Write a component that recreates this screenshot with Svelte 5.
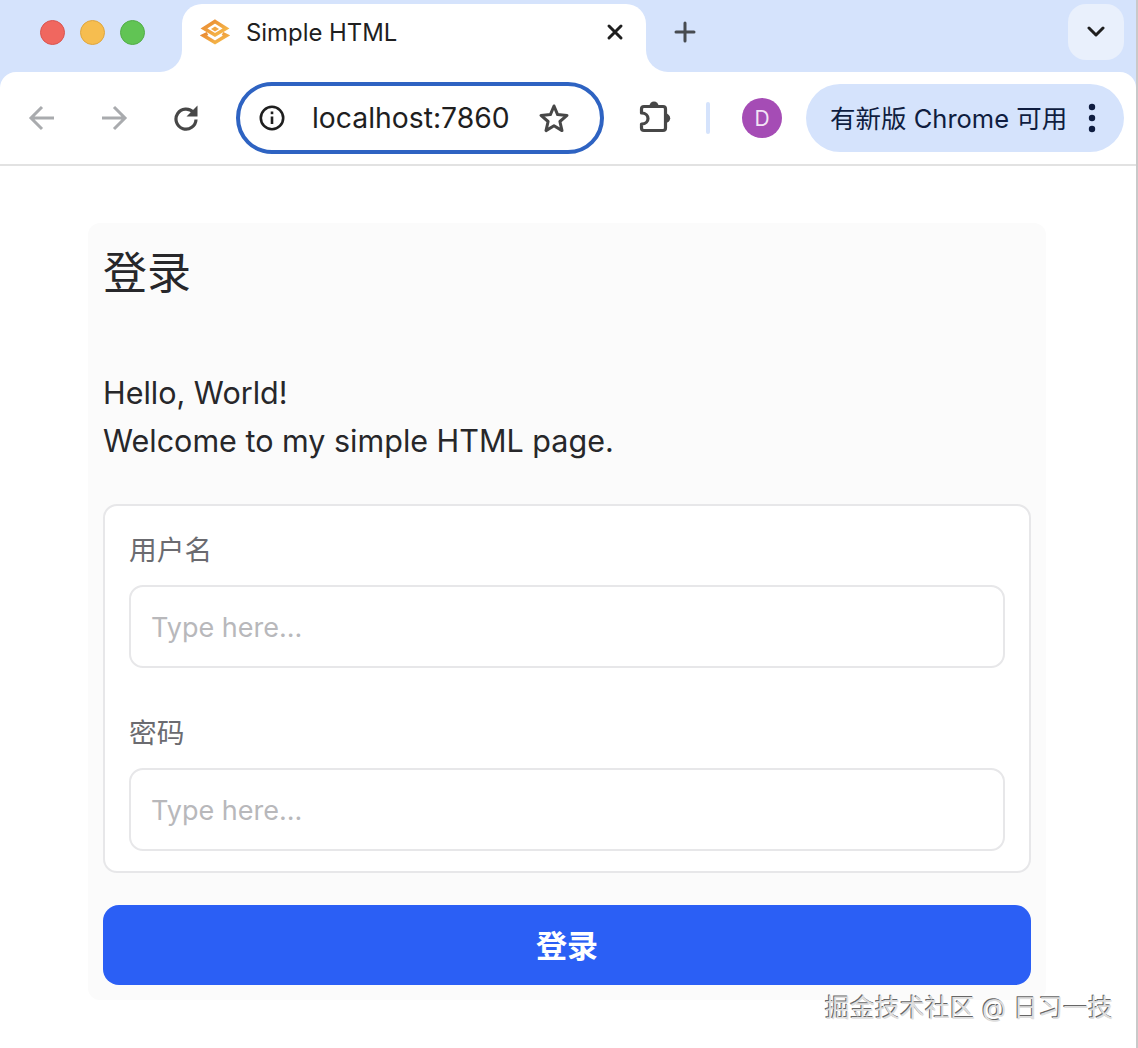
<script>
	const fields = [
		{ label: "用户名", type: "text" },
		{ label: "密码", type: "password" }
	];
</script>

<div class="window">
	<header class="chrome">
		<div class="strip">
			<div class="lights">
				<span class="light red"></span>
				<span class="light yellow"></span>
				<span class="light green"></span>
			</div>
			<div class="tab">
				<svg class="favicon" width="30" height="26" viewBox="0 0 30 26" fill="none">
					<defs>
						<linearGradient id="fav" x1="0" y1="0" x2="1" y2="1">
							<stop offset="0" stop-color="#e98a33" />
							<stop offset="1" stop-color="#f7bd4b" />
						</linearGradient>
					</defs>
					<path d="M15 2.5 L26 9.5 L15 16 L4 9.5 Z" stroke="url(#fav)" stroke-width="3.6" />
					<path d="M7.5 14.5 L3.5 16.5 L15 23.5 L26.5 16.5 L22.5 14.5" stroke="url(#fav)" stroke-width="3.6" />
					<path d="M15 7.5 L19 10 L15 12.5 L11 10 Z" fill="#f2a743" />
				</svg>
				<span class="tab-title">Simple HTML</span>
				<svg class="close" width="20" height="20" viewBox="0 0 20 20" stroke="#1f1f1f" stroke-width="3" stroke-linecap="round">
					<path d="M4 4 L16 16 M16 4 L4 16" />
				</svg>
			</div>
			<div class="strip-rest">
				<svg class="plus" width="22" height="22" viewBox="0 0 22 22" stroke="#474b50" stroke-width="3" stroke-linecap="round">
					<path d="M11 2 V20 M2 11 H20" />
				</svg>
				<div class="tab-search">
					<svg width="18" height="12" viewBox="0 0 18 12" fill="none" stroke="#1f1f1f" stroke-width="3" stroke-linecap="round" stroke-linejoin="round">
						<path d="M2 2 L9 9 L16 2" />
					</svg>
				</div>
			</div>
		</div>

		<div class="toolbar">
			<svg class="nav back" width="28" height="26" viewBox="0 0 28 26" fill="none" stroke="#a9abae" stroke-width="3">
				<path d="M26 13 H4 M14 2 L3 13 L14 24" />
			</svg>
			<svg class="nav forward" width="28" height="26" viewBox="0 0 28 26" fill="none" stroke="#a9abae" stroke-width="3">
				<path d="M2 13 H24 M14 2 L25 13 L14 24" />
			</svg>
			<svg class="nav reload" width="26" height="26" viewBox="0 0 26 26" fill="none">
				<path d="M20.5 7.5 A10 10 0 1 0 23 14.5" stroke="#474747" stroke-width="3.2" />
				<path d="M24.5 0.5 V11.5 H13.5 Z" fill="#474747" />
			</svg>
			<div class="omnibox">
				<svg width="26" height="26" viewBox="0 0 26 26" fill="none" stroke="#1f1f1f" stroke-width="2.6">
					<circle cx="13" cy="13" r="11.2" />
					<path d="M13 11.5 V19" />
					<path d="M13 6.5 V9.2" />
				</svg>
				<span class="url">localhost:7860</span>
				<svg class="star" width="32" height="30" viewBox="0 0 32 30" fill="none" stroke="#474747" stroke-width="3" stroke-linejoin="round">
					<path d="M16 3 L19.6 11.6 L29 12.4 L21.9 18.5 L24 27.6 L16 22.8 L8 27.6 L10.1 18.5 L3 12.4 L12.4 11.6 Z" />
				</svg>
			</div>
			<svg class="puzzle" width="36" height="36" viewBox="0 0 36 36" fill="none">
				<path d="M6 6.5 H25 a2.5 2.5 0 0 1 2.5 2.5 V28 a2.5 2.5 0 0 1 -2.5 2.5 H6 a2.5 2.5 0 0 1 -2.5 -2.5 V24 C8 24 10 21 10 18.5 C10 16 8 13 3.5 13 V9 a2.5 2.5 0 0 1 2.5 -2.5 Z" stroke="#474747" stroke-width="3.2" stroke-linejoin="round" />
				<path d="M11.5 6 a4.5 4.5 0 0 1 9 0 Z" fill="#474747" />
				<path d="M27.5 13.5 a4.7 4.7 0 0 1 0 9.4 Z" fill="#474747" />
			</svg>
			<span class="divider"></span>
			<span class="avatar">D</span>
			<div class="update">
				<span class="update-text">有新版 Chrome 可用</span>
				<svg width="8" height="30" viewBox="0 0 8 30" fill="#0f1d40">
					<circle cx="4" cy="4" r="3.2" />
					<circle cx="4" cy="15" r="3.2" />
					<circle cx="4" cy="26" r="3.2" />
				</svg>
			</div>
		</div>
	</header>

	<main class="page">
		<section class="card">
			<h1>登录</h1>
			<div class="intro">
				<p>Hello, World!</p>
				<p>Welcome to my simple HTML page.</p>
			</div>
			<div class="form">
				{#each fields as field}
				<label class="field">
					<span class="field-label">{field.label}</span>
					<input type={field.type} placeholder="Type here..." />
				</label>
				{/each}
			</div>
			<button class="submit"><span>登录</span></button>
		</section>
	</main>

	<div class="watermark">掘金技术社区 @ 日习一技</div>
</div>

<style>
	:global(body) {
		margin: 0;
		background: #fff;
	}
	.window {
		position: relative;
		width: 1136px;
		height: 1048px;
		border-right: 2px solid #c9c9c9;
		overflow: hidden;
		font-family: Inter, "Noto Sans CJK SC", sans-serif;
		color: #27272a;
	}
	.chrome {
		background: #d5e3fc;
		border-top-right-radius: 10px;
	}
	.strip {
		display: flex;
		height: 72px;
		background: linear-gradient(#d5e3fc 0 36px, #fff 36px);
	}
	.lights {
		display: flex;
		gap: 15px;
		padding: 20px 0 0 40px;
		box-sizing: border-box;
		width: 182px;
		background: #d5e3fc;
		border-bottom-right-radius: 22px;
	}
	.light {
		width: 25px;
		height: 25px;
		box-sizing: border-box;
		border-radius: 50%;
	}
	.red {
		background: #f0675f;
		border: 1px solid #d9554f;
	}
	.yellow {
		background: #f6bd4f;
		border: 1px solid #dfa63f;
	}
	.green {
		background: #61c454;
		border: 1px solid #52ad47;
	}
	.tab {
		display: flex;
		align-items: center;
		width: 464px;
		height: 68px;
		margin-top: 4px;
		padding: 0 21px 12px 18px;
		box-sizing: border-box;
		background: #fff;
		border-radius: 20px 20px 0 0;
	}
	.tab-title {
		margin-left: 16px;
		font-size: 23.9px;
		color: #1f1f1f;
	}
	.close {
		margin-left: auto;
	}
	.strip-rest {
		flex: 1;
		display: flex;
		align-items: flex-start;
		justify-content: space-between;
		padding: 4px 12px 0 28px;
		background: #d5e3fc;
		border-bottom-left-radius: 22px;
	}
	.plus {
		margin-top: 17px;
	}
	.tab-search {
		display: flex;
		align-items: center;
		justify-content: center;
		width: 56px;
		height: 56px;
		background: #e9f0fc;
		border-radius: 18px;
	}
	.toolbar {
		display: flex;
		align-items: center;
		height: 92px;
		border-bottom: 2px solid #e2e2e2;
		background: #fff;
		border-radius: 16px 16px 0 0;
	}
	.back {
		margin-left: 28px;
	}
	.forward {
		margin-left: 44px;
	}
	.reload {
		margin-left: 45px;
	}
	.omnibox {
		display: flex;
		align-items: center;
		width: 368px;
		height: 72px;
		margin-left: 37px;
		padding: 0 33px 0 19px;
		box-sizing: border-box;
		border: 4px solid #2e63c2;
		border-radius: 36px;
	}
	.url {
		margin-left: 27px;
		font-size: 28.3px;
		color: #1f1f1f;
	}
	.star {
		margin-left: auto;
		margin-right: -3px;
	}
	.puzzle {
		margin-left: 34px;
	}
	.divider {
		width: 4px;
		height: 32px;
		margin-left: 32px;
		background: #d5e3fc;
		border-radius: 2px;
	}
	.avatar {
		display: flex;
		align-items: center;
		justify-content: center;
		width: 40px;
		height: 40px;
		margin-left: 32px;
		border-radius: 50%;
		background: #a54cb5;
		color: #f3e3f6;
		font-size: 21px;
	}
	.update {
		display: flex;
		align-items: center;
		justify-content: space-between;
		width: 318px;
		height: 68px;
		margin-left: 24px;
		padding: 0 28px 0 24px;
		box-sizing: border-box;
		background: #d5e3fc;
		border-radius: 34px;
	}
	.update-text {
		padding-bottom: 4px;
		font-size: 25.5px;
		color: #0f1d40;
		white-space: nowrap;
	}
	.page {
		padding: 57px 0 0 88px;
	}
	.card {
		width: 958px;
		height: 777px;
		padding: 0 15px;
		box-sizing: border-box;
		background: #fbfbfb;
		border-radius: 12px;
	}
	h1 {
		margin: 0;
		padding-top: 21px;
		font-size: 44px;
		line-height: 58px;
		font-weight: 400;
		color: #27272a;
	}
	.intro {
		margin-top: 67px;
		font-size: 30.5px;
		line-height: 48px;
	}
	.intro p {
		margin: 0;
	}
	.form {
		display: flex;
		flex-direction: column;
		gap: 45px;
		margin: 39px 0 32px;
		padding: 24px 24px 20px;
		height: 369px;
		box-sizing: border-box;
		background: #fff;
		border: 2px solid #e7e7e9;
		border-radius: 14px;
	}
	.field {
		display: flex;
		flex-direction: column;
		gap: 15px;
	}
	.field-label {
		font-size: 27.7px;
		line-height: 40px;
		color: #6b6b70;
	}
	input {
		width: 100%;
		height: 83px;
		padding: 2px 20px 0;
		box-sizing: border-box;
		background: #fff;
		border: 2px solid #e7e7e9;
		border-radius: 14px;
		outline: none;
		font-family: inherit;
		font-size: 27px;
	}
	input::placeholder {
		color: #b8b8bb;
	}
	.submit {
		display: block;
		width: 100%;
		height: 80px;
		padding: 0 0 4px;
		background: #2b5ff5;
		border: 0;
		border-radius: 16px;
		color: #fff;
		font-family: inherit;
		font-size: 31px;
		font-weight: 700;
	}
	.watermark {
		position: absolute;
		left: 825px;
		top: 990px;
		font-size: 25px;
		line-height: 36px;
		white-space: nowrap;
		color: #dedede;
		text-shadow: -1px -1px 0 #666;
	}
</style>
